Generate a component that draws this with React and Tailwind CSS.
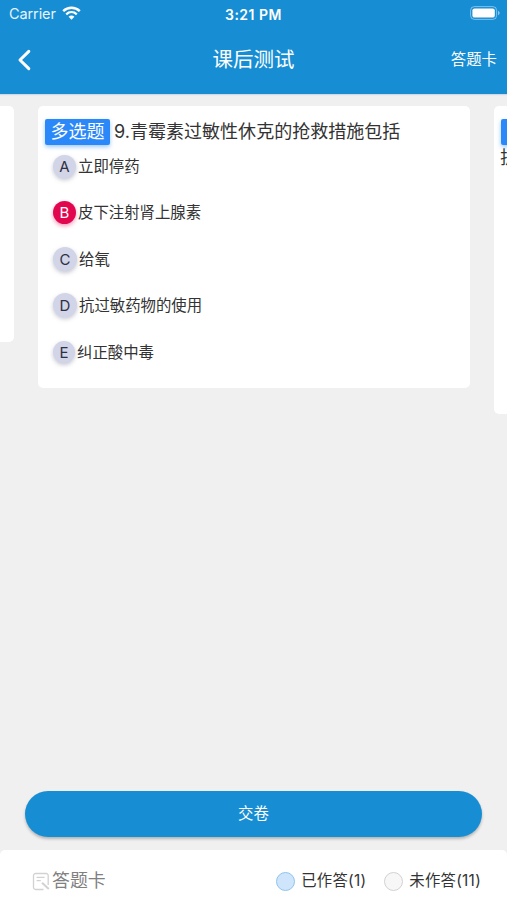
import { useState } from 'react';

const options = [
    { letter: 'A', text: '立即停药', size: 'w-[23px] h-[23px]', row: 'h-[46px]' },
    { letter: 'B', text: '皮下注射肾上腺素', size: 'w-[23px] h-[23px]', row: 'h-[47px]' },
    { letter: 'C', text: '给氧', size: 'w-6 h-6', row: 'h-[46px]' },
    { letter: 'D', text: '抗过敏药物的使用', size: 'w-6 h-6', row: 'h-[47px]' },
    { letter: 'E', text: '纠正酸中毒', size: 'w-[22px] h-[22px]', row: 'h-[46px]' },
];

function StatusBar() {
    return (
        <div className="h-7 grid grid-cols-3 items-center pl-[9px] pr-[7px]">
            <div className="flex items-center gap-[6px]">
                <span className="text-[14.5px] leading-5 tracking-[-0.1px] opacity-90">Carrier</span>
                <svg className="-mt-[2px]" width="19" height="14" viewBox="0 0 19 14" fill="none">
                    <path d="M1.2 5.1C6 .7 13 .7 17.8 5.1" stroke="#fff" strokeWidth="2.5" />
                    <path d="M4.2 8.3C7.3 5.5 11.7 5.5 14.8 8.3" stroke="#fff" strokeWidth="2.3" />
                    <path d="M6.6 10.8C8.3 9.2 10.7 9.2 12.4 10.8L9.5 13.8Z" fill="#fff" />
                </svg>
            </div>
            <div className="text-center text-[14px] font-semibold tracking-[0.5px] -ml-[2px]">3:21 PM</div>
            <svg className="justify-self-end -mt-[2px]" width="30" height="14" viewBox="0 0 30 14">
                <rect x=".6" y=".6" width="26" height="12.8" rx="3.8" fill="none" stroke="#fff" strokeOpacity=".45" />
                <rect x="2.4" y="2.4" width="22.4" height="9.2" rx="2.2" fill="#fff" />
                <path d="M28 4.8q1.7.8 1.7 2.2T28 9.2z" fill="#fff" fillOpacity=".5" />
            </svg>
        </div>
    );
}

function Badge({ children }) {
    return (
        <span className="shrink-0 w-[65px] h-[26px] flex items-center justify-center rounded-[2px] bg-[#2b88f8] text-white text-[18px] leading-none shadow-[0_2px_4px_rgba(43,136,248,0.45)]">
            {children}
        </span>
    );
}

function App() {
    const [selected, setSelected] = useState('B');

    return (
        <div className="w-full h-[900px] flex flex-col overflow-hidden bg-[#f0f0f0] text-[#333] font-['Inter','Noto_Sans_CJK_SC',sans-serif]">
            <header className="h-[94px] shrink-0 bg-[#178ed4] text-white shadow-[0_1px_1px_rgba(190,200,220,0.6)]">
                <StatusBar />
                <div className="h-[64px] flex items-center justify-between pl-[17px] pr-[10px]">
                    <button className="w-[46px]" aria-label="返回">
                        <svg width="15" height="22" viewBox="0 0 15 22" fill="none" stroke="#fff" strokeWidth="3" strokeLinecap="round" strokeLinejoin="round">
                            <path d="M11.8 2.4 3 11l8.8 8.6" />
                        </svg>
                    </button>
                    <h1 className="text-[20.5px] leading-none whitespace-nowrap pr-[7px]">课后测试</h1>
                    <button className="text-[15.4px] leading-none">答题卡</button>
                </div>
            </header>

            <main className="flex-1 flex items-start gap-6 pt-3 overflow-hidden">
                {/* 上一题 */}
                <section className="w-[14px] h-[236px] shrink-0 rounded-r-[5px] bg-white" />

                <section className="w-[432px] h-[282px] shrink-0 rounded-[5px] bg-white pt-[13px] pl-[7px]">
                    <div className="flex items-center">
                        <Badge>多选题</Badge>
                        <p className="pl-1 text-[18.05px] leading-[26px] whitespace-nowrap">9.青霉素过敏性休克的抢救措施包括</p>
                    </div>
                    <ul className="pl-2 -mt-[1px]">
                        {options.map((o) => (
                            <li key={o.letter} className={o.row}>
                                <button className="h-[46px] flex items-center gap-[2px]" onClick={() => setSelected(o.letter)}>
                                    <span
                                        className={`${o.size} -mt-[2px] flex items-center justify-center rounded-full text-[15px] leading-none ${
                                            selected === o.letter
                                                ? 'bg-[#e2064f] text-white shadow-[0_2px_4px_rgba(226,6,79,0.4)]'
                                                : 'bg-[#d2d4e7] text-[#2f3142] shadow-[0_2px_4px_rgba(90,95,130,0.35)]'
                                        }`}
                                    >
                                        {o.letter}
                                    </span>
                                    <span className="text-[15.4px] leading-none">{o.text}</span>
                                </button>
                            </li>
                        ))}
                    </ul>
                </section>

                {/* 下一题 */}
                <section className="w-[432px] h-[308px] shrink-0 rounded-[5px] bg-white pt-[13px] pl-[7px]">
                    <Badge>多选题</Badge>
                    <p className="-ml-[1px] text-[17.9px] leading-[25px]">护</p>
                </section>
            </main>

            <div className="shrink-0 px-[25px] pb-[13px]">
                <button className="w-full h-[46px] rounded-full bg-[#178ed4] text-white text-[15.4px] leading-none shadow-[0_2px_3px_rgba(0,0,0,0.25)]">
                    交卷
                </button>
            </div>

            <footer className="h-[50px] shrink-0 flex items-center justify-between rounded-t-[5px] bg-white pl-8 pr-[26px] pt-3">
                <div className="flex items-center gap-[2px] text-[#808080]">
                    <svg width="18" height="19" viewBox="0 0 18 19" fill="none" stroke="#d2d2d2" strokeWidth="1.3">
                        <path d="M11.5 17.5H3.5a2 2 0 0 1-2-2v-12a2 2 0 0 1 2-2h10.7a2 2 0 0 1 2 2v9.500" />
                        <path d="M4.600 5.300h8M4.600 8.600h4.200" />
                        <path d="m10 10.700 6.800 6.300" strokeWidth="2" />
                    </svg>
                    <span className="text-[17.9px] leading-none">答题卡</span>
                </div>
                <div className="flex items-center text-[15.4px] leading-none tracking-[0.25px]">
                    <span className="w-[19px] h-[19px] rounded-full border border-[#8fc4ee] bg-[#cfe5fc]" />
                    <span className="ml-[6px]">已作答(1)</span>
                    <span className="ml-[18px] w-[19px] h-[19px] rounded-full border border-[#d2d2d2] bg-[#f7f7f7]" />
                    <span className="ml-[6px]">未作答(11)</span>
                </div>
            </footer>
        </div>
    );
}

export default App;
